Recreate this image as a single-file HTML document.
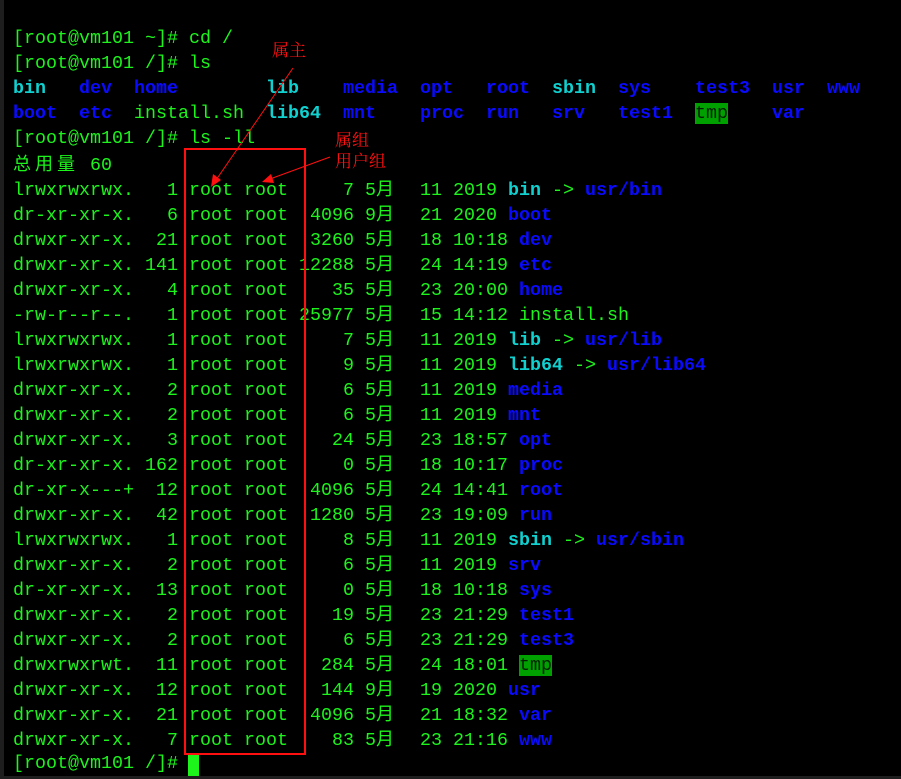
<!DOCTYPE html>
<html><head><meta charset="utf-8"><style>
html,body{margin:0;padding:0;width:901px;height:779px;overflow:hidden;background:#1e1e1e}
#t{position:absolute;left:4px;top:0;width:897px;height:776px;background:#000}
.l{position:absolute;left:13px;height:25px;line-height:25px;white-space:pre;font-family:"Liberation Mono","Noto Sans CJK SC",monospace;font-size:18.33px;color:#1cf41c;margin-top:1px}
.c{display:inline-block;width:22px;text-align:left;font-family:"Noto Sans CJK SC",sans-serif;font-size:18px}
.b{color:#0a0aff;font-weight:bold}
.y{color:#10d0d0;font-weight:bold}
.g{background:#00a000;color:#002000}
.a{position:absolute;color:#ff1010;font-family:"Noto Serif CJK SC",serif;font-size:17px;line-height:18px;white-space:nowrap}
</style></head><body>
<div id="t"></div>
<div class="l" style="top:25px">[root@vm101 ~]# cd /</div>
<div class="l" style="top:50px">[root@vm101 /]# ls</div>
<div class="l" style="top:75px"><span class="y">bin</span>   <span class="b">dev</span>  <span class="b">home</span>        <span class="y">lib</span>    <span class="b">media</span>  <span class="b">opt</span>   <span class="b">root</span>  <span class="y">sbin</span>  <span class="b">sys</span>    <span class="b">test3</span>  <span class="b">usr</span>  <span class="b">www</span></div>
<div class="l" style="top:100px"><span class="b">boot</span>  <span class="b">etc</span>  install.sh  <span class="y">lib64</span>  <span class="b">mnt</span>    <span class="b">proc</span>  <span class="b">run</span>   <span class="b">srv</span>   <span class="b">test1</span>  <span class="g">tmp</span>    <span class="b">var</span></div>
<div class="l" style="top:125px">[root@vm101 /]# ls -ll</div>
<div class="l" style="top:150px"><span class="c">总</span><span class="c">用</span><span class="c">量</span> 60</div>
<div class="l" style="top:175px">lrwxrwxrwx.   1 root root     7 5<span class="c">月</span>  11 2019 <span class="y">bin</span> -&gt; <span class="b">usr/bin</span></div>
<div class="l" style="top:200px">dr-xr-xr-x.   6 root root  4096 9<span class="c">月</span>  21 2020 <span class="b">boot</span></div>
<div class="l" style="top:225px">drwxr-xr-x.  21 root root  3260 5<span class="c">月</span>  18 10:18 <span class="b">dev</span></div>
<div class="l" style="top:250px">drwxr-xr-x. 141 root root 12288 5<span class="c">月</span>  24 14:19 <span class="b">etc</span></div>
<div class="l" style="top:275px">drwxr-xr-x.   4 root root    35 5<span class="c">月</span>  23 20:00 <span class="b">home</span></div>
<div class="l" style="top:300px">-rw-r--r--.   1 root root 25977 5<span class="c">月</span>  15 14:12 install.sh</div>
<div class="l" style="top:325px">lrwxrwxrwx.   1 root root     7 5<span class="c">月</span>  11 2019 <span class="y">lib</span> -&gt; <span class="b">usr/lib</span></div>
<div class="l" style="top:350px">lrwxrwxrwx.   1 root root     9 5<span class="c">月</span>  11 2019 <span class="y">lib64</span> -&gt; <span class="b">usr/lib64</span></div>
<div class="l" style="top:375px">drwxr-xr-x.   2 root root     6 5<span class="c">月</span>  11 2019 <span class="b">media</span></div>
<div class="l" style="top:400px">drwxr-xr-x.   2 root root     6 5<span class="c">月</span>  11 2019 <span class="b">mnt</span></div>
<div class="l" style="top:425px">drwxr-xr-x.   3 root root    24 5<span class="c">月</span>  23 18:57 <span class="b">opt</span></div>
<div class="l" style="top:450px">dr-xr-xr-x. 162 root root     0 5<span class="c">月</span>  18 10:17 <span class="b">proc</span></div>
<div class="l" style="top:475px">dr-xr-x---+  12 root root  4096 5<span class="c">月</span>  24 14:41 <span class="b">root</span></div>
<div class="l" style="top:500px">drwxr-xr-x.  42 root root  1280 5<span class="c">月</span>  23 19:09 <span class="b">run</span></div>
<div class="l" style="top:525px">lrwxrwxrwx.   1 root root     8 5<span class="c">月</span>  11 2019 <span class="y">sbin</span> -&gt; <span class="b">usr/sbin</span></div>
<div class="l" style="top:550px">drwxr-xr-x.   2 root root     6 5<span class="c">月</span>  11 2019 <span class="b">srv</span></div>
<div class="l" style="top:575px">dr-xr-xr-x.  13 root root     0 5<span class="c">月</span>  18 10:18 <span class="b">sys</span></div>
<div class="l" style="top:600px">drwxr-xr-x.   2 root root    19 5<span class="c">月</span>  23 21:29 <span class="b">test1</span></div>
<div class="l" style="top:625px">drwxr-xr-x.   2 root root     6 5<span class="c">月</span>  23 21:29 <span class="b">test3</span></div>
<div class="l" style="top:650px">drwxrwxrwt.  11 root root   284 5<span class="c">月</span>  24 18:01 <span class="g">tmp</span></div>
<div class="l" style="top:675px">drwxr-xr-x.  12 root root   144 9<span class="c">月</span>  19 2020 <span class="b">usr</span></div>
<div class="l" style="top:700px">drwxr-xr-x.  21 root root  4096 5<span class="c">月</span>  21 18:32 <span class="b">var</span></div>
<div class="l" style="top:725px">drwxr-xr-x.   7 root root    83 5<span class="c">月</span>  23 21:16 <span class="b">www</span></div>
<div class="l" style="top:750px">[root@vm101 /]# </div>
<div style="position:absolute;left:188px;top:753px;width:11px;height:23px;background:#1cf41c"></div>
<div style="position:absolute;left:184px;top:148px;width:118px;height:603px;border:2px solid #ff1010"></div>
<div class="a" style="left:272px;top:40px">属主</div>
<div class="a" style="left:335px;top:130px">属组</div>
<div class="a" style="left:335px;top:151px">用户组</div>
<svg style="position:absolute;left:0;top:0" width="901" height="779">
<line x1="293" y1="68" x2="216" y2="180" stroke="#ff1010" stroke-width="1"/>
<polygon points="211,187 213,174 221,180" fill="#ff1010"/>
<line x1="330" y1="157" x2="270" y2="179" stroke="#ff1010" stroke-width="1"/>
<polygon points="262,182 271,174 274,183" fill="#ff1010"/>
</svg>
</body></html>
